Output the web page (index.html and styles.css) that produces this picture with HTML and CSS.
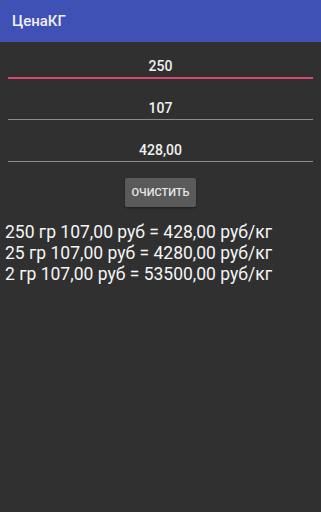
FILE: index.html
```html
<!DOCTYPE html>
<html lang="ru">
<head>
<meta charset="utf-8">
<link rel="stylesheet" href="styles.css">
</head>
<body>
<header class="appbar">ЦенаКГ</header>
<main class="content">
  <div class="field field-focused">250</div>
  <div class="field">107</div>
  <div class="field">428,00</div>
  <div class="btn-row"><button class="btn">ОЧИСТИТЬ</button></div>
  <div class="results">
    <div class="line">250 гр 107,00 руб = 428,00 руб/кг</div>
    <div class="line">25 гр 107,00 руб = 4280,00 руб/кг</div>
    <div class="line">2 гр 107,00 руб = 53500,00 руб/кг</div>
  </div>
</main>
</body>
</html>
```
FILE: styles.css
```css
html, body {
  margin: 0;
  padding: 0;
  background: #303030;
  height: 100%;
}
body {
  font-family: Roboto, "Noto Sans", sans-serif;
  color: #f2f2f2;
}
.appbar {
  height: 42px;
  background: #3f51b5;
  color: #eef0fa;
  font-size: 15px;
  font-weight: 500;
  line-height: 42px;
  padding-left: 12px;
  box-sizing: border-box;
}
.content {
  padding: 14px 8px 0 8px;
}
.field {
  height: 21px;
  line-height: 21px;
  text-align: center;
  font-size: 14px;
  font-weight: 500;
  color: #f0f0f0;
  border-bottom: 1px solid #8c8c8c;
  margin-bottom: 20px;
}
.field-focused {
  border-bottom: 2px solid #d9456d;
  margin-bottom: 19px;
}
.field:last-of-type {
  margin-bottom: 0;
}
.btn-row {
  display: flex;
  justify-content: center;
  margin-top: -4px;
}
.btn {
  width: 71px;
  height: 29px;
  background: #5a5a5a;
  color: #e8e8e8;
  border: none;
  border-radius: 2px;
  font-family: Roboto, sans-serif;
  font-size: 11px;
  font-weight: 500;
  padding: 0;
  box-shadow: 0 1px 2px rgba(0,0,0,0.4);
}
.results {
  margin: 15px 0 0 -3px;
}
.line {
  font-size: 17.5px;
  line-height: 21px;
  color: #f5f5f5;
  white-space: nowrap;
}
```
